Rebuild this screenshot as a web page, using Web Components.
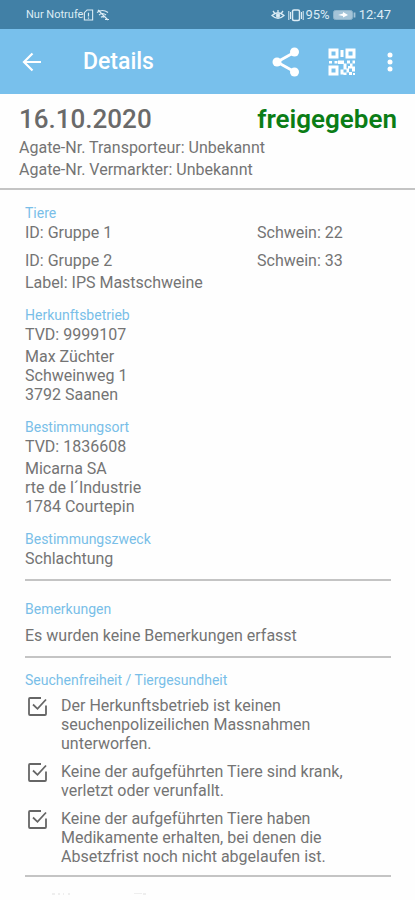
<!DOCTYPE html>
<html lang="de">
<head>
<meta charset="utf-8">
<meta name="viewport" content="width=device-width, initial-scale=1">
<title>Details</title>
<style>
html { background: #fefefe; }
body { margin: 0; font-family: Roboto, "Liberation Sans", sans-serif; font-size: 16px; line-height: 19px; color: #747474; }
</style>
</head>
<body>
<detail-page></detail-page>
<script>
const define = (name, html) => {
  const template = document.createElement('template');
  template.innerHTML = html;
  customElements.define(name, class extends HTMLElement {
    constructor() {
      super();
      this.attachShadow({ mode: 'open' }).append(template.content.cloneNode(true));
    }
  });
};

define('status-bar', `
<style>
:host { display: flex; justify-content: space-between; align-items: center; height: 29px; padding: 1px 24px 0 26px; box-sizing: border-box; background: #4180a6; color: #dcecf5; font-size: 11px; line-height: 14px; }
div { display: flex; align-items: center; }
.right { font-size: 13px; }
svg { display: block; fill: none; stroke: currentColor; }
.vib { margin: 0 1px 0 3px; }
.battery { margin: 0 3px; }
.wifi { margin-left: 2px; }
</style>
<div><span>Nur Notrufe</span>
<svg width="11" height="14" viewBox="0 0 12 14"><path d="M4.500 1.500H10.500V12.500H1.500V4.500Z" stroke-width="1.200"/><path d="M6 4.500V8.500M6 9.700V11" stroke-width="1.300"/></svg>
<svg class="wifi" width="14" height="12" viewBox="0 0 14 12"><path d="M1 3.500Q6.500-.5 12 3.500M3 6Q6.500 3 10 6M5 8.300Q6.500 7 8 8.300M2 1L12 11M9 10.500H13" stroke-width="1.200"/></svg>
</div>
<div class="right">
<svg width="14" height="14" viewBox="0 0 14 14"><path d="M1 7.500Q7 2 13 7.500Q7 13 1 7.500ZM7 4V2M3.500 5L2 3M10.500 5L12 3" stroke-width="1.300"/><circle cx="7" cy="7.500" r="1.700" fill="currentColor"/></svg>
<svg class="vib" width="16" height="14" viewBox="0 0 16 14"><rect x="4.500" y="2" width="7" height="10.500" rx="1.500" stroke-width="1.500"/><path d="M2.500 4V11M13.500 4V11M.8 3V12M15.200 3V12" stroke-width="1"/></svg>
<span>95%</span>
<svg class="battery" width="23" height="12" viewBox="0 0 23 12"><rect x=".5" y="1.500" width="19" height="9" rx="2" fill="#a4c4d8" stroke="#8db4cb"/><path d="M21.500 3.500V8.500" stroke="#a4c4d8" stroke-width="1.800"/><path d="M5 6L10 4.500V3L15 6L10 8.500V7Z" fill="#fff" stroke="none"/></svg>
<span>12:47</span></div>`);

define('icon-button', `
<style>
:host { display: block; }
button { display: grid; place-items: center; width: 100%; height: 100%; margin: 0; padding: 0; border: 0; background: none; color: inherit; cursor: pointer; }
::slotted(svg) { display: block; }
</style>
<button type="button"><slot></slot></button>`);

define('app-bar', `
<style>
:host { display: flex; align-items: center; height: 65px; padding: 0 9px 0 16px; box-sizing: border-box; background: #78c0ec; color: #fff; }
icon-button { width: 32px; height: 48px; }
h1 { flex: 1; margin: 0 0 0 35px; font-size: 23px; line-height: 28px; font-weight: 500; }
.share { width: 56px; }
.qr { width: 56px; }
.more { width: 32px; margin-left: 4px; }
</style>
<icon-button><svg width="20" height="20" viewBox="0 0 20 20" role="img" aria-label="Zurück" fill="none" stroke="#fff" stroke-width="2.200"><path d="M10.500 1.500L2 10L10.500 18.500M2 10H19"/></svg></icon-button>
<h1>Details</h1>
<icon-button class="share"><svg width="28" height="30" viewBox="0 0 28 30" role="img" aria-label="Teilen"><path d="M23 5L5 15L23 25" fill="none" stroke="#fff" stroke-width="2.800"/><g fill="#fff"><circle cx="22.500" cy="5" r="4.500"/><circle cx="5" cy="15" r="4.500"/><circle cx="22.500" cy="25" r="4.500"/></g></svg></icon-button>
<icon-button class="qr"><svg width="28" height="28" viewBox="0 0 28 28" role="img" aria-label="QR-Code"><g fill="none" stroke="#fff" stroke-width="3"><rect x="2" y="2" width="7" height="7"/><rect x="19" y="2" width="7" height="7"/><rect x="2" y="19" width="7" height="7"/></g><path fill="#fff" d="M12.500 2h3v7h-3zM1 13h3v2.500H1zM6.500 13h3v2.500h-3zM10 12.500h6v3h2.500v3h-3v-2.500H10zM19 12.500h3v3h-3zM24.500 12.500h2.500v3h-2.500zM22 15.500h2.500v3H22zM15.500 18.500h3v3h-3v5h-3v-5h3zM24 18.500h3v5h-3zM20 18h4v2.500h-4zM18.500 20.500h2.500v4h-2.500v2.500h-3v-2.500h3zM21 24h3v3h-3zM25 25h2v2h-2z"/></svg></icon-button>
<icon-button class="more"><svg width="6" height="20" viewBox="0 0 6 20" role="img" aria-label="Mehr" fill="#fff"><circle cx="3" cy="3" r="2.500"/><circle cx="3" cy="10" r="2.500"/><circle cx="3" cy="17" r="2.500"/></svg></icon-button>`);

define('transport-summary', `
<style>
:host { display: block; padding: 8px 18px 7px 19px; border-bottom: 2px solid #c4c4c4; line-height: 22px; }
div { display: flex; justify-content: space-between; align-items: center; font-size: 26px; line-height: 35px; font-weight: 500; }
h2 { margin: 0; font: inherit; color: #6a6a6a; }
strong { font-weight: 600; color: #0b7d16; }
p { margin: 0; }
</style>
<div><h2><slot name="date"></slot></h2><strong><slot name="state"></slot></strong></div>
<p><slot></slot></p>
<p><slot name="marketer"></slot></p>`);

define('detail-section', `
<style>
:host { display: block; }
h3 { margin: 0; font-size: 14px; line-height: 18px; font-weight: 400; color: #79bee8; }
</style>
<h3><slot name="title"></slot></h3>
<slot></slot>`);

define('animal-group', `
<style>
:host { display: grid; grid-template-columns: 232fr 134fr; line-height: 22px; }
</style>
<span><slot></slot></span><span><slot name="count"></slot></span>`);

define('health-check', `
<style>
:host { display: block; }
label { display: flex; align-items: flex-start; gap: 13px; }
input { appearance: none; display: grid; width: 21px; height: 21px; margin: 0 0 0 2px; }
.box { position: relative; flex: none; width: 23px; height: 21px; }
.box svg { position: absolute; left: 2px; top: 0; pointer-events: none; }
input:not(:checked) + svg .tick { visibility: hidden; }
</style>
<label><span class="box"><input type="checkbox" checked><svg width="21" height="21" viewBox="0 0 21 21" fill="none" stroke="#666" stroke-width="1.800"><path d="M14 2H3Q2 2 2 3V18Q2 19 3 19H18Q19 19 19 18V9.500"/><path class="tick" d="M6 8.500L10.500 12.800L19 3.500"/></svg></span><span><slot></slot></span></label>`);

define('detail-page', `
<style>
:host { display: block; height: 100vh; overflow: hidden; }
main { padding: 14px 24px 0 25px; }
p { margin: 0; }
.line { line-height: 22px; }
.address { padding: 1px 0 2px; }
.stack { display: grid; gap: 12px; }
.groups { display: grid; gap: 6px; }
hr { height: 2px; margin: 9px 0 19px; border: 0; background: #c4c4c4; }
hr.tight { margin-bottom: 13px; }
.checks { display: grid; gap: 9px; padding-top: 7px; }
.remark { padding-top: 7px; }
.fading { display: block; margin: -4px 0 0 25px; }
</style>
<status-bar></status-bar>
<app-bar></app-bar>
<transport-summary><span slot="date">16.10.2020</span><span slot="state">freigegeben</span>Agate-Nr. Transporteur: Unbekannt<span slot="marketer">Agate-Nr. Vermarkter: Unbekannt</span></transport-summary>
<main>
<div class="stack">
<detail-section><span slot="title">Tiere</span><div class="groups"><animal-group>ID: Gruppe 1<span slot="count">Schwein: 22</span></animal-group><animal-group>ID: Gruppe 2<span slot="count">Schwein: 33</span></animal-group></div><p class="line">Label: IPS Mastschweine</p></detail-section>
<detail-section><span slot="title">Herkunftsbetrieb</span><p class="line">TVD: 9999107</p><p class="address">Max Züchter<br>Schweinweg 1<br>3792 Saanen</p></detail-section>
<detail-section><span slot="title">Bestimmungsort</span><p class="line">TVD: 1836608</p><p class="address">Micarna SA<br>rte de l´Industrie<br>1784 Courtepin</p></detail-section>
<detail-section><span slot="title">Bestimmungszweck</span><p class="line">Schlachtung</p></detail-section>
</div>
<hr>
<detail-section><span slot="title">Bemerkungen</span><p class="line remark">Es wurden keine Bemerkungen erfasst</p></detail-section>
<hr class="tight">
<detail-section><span slot="title">Seuchenfreiheit / Tiergesundheit</span><div class="checks">
<health-check>Der Herkunftsbetrieb ist keinen seuchenpolizeilichen Massnahmen unterworfen.</health-check>
<health-check>Keine der aufgeführten Tiere sind krank, verletzt oder verunfallt.</health-check>
<health-check>Keine der aufgeführten Tiere haben Medikamente erhalten, bei denen die Absetzfrist noch nicht abgelaufen ist.</health-check>
</div></detail-section>
<hr>
<svg class="fading" width="120" height="4" viewBox="0 0 120 4" fill="#eee" aria-hidden="true"><path d="M2 1h3v2H2zM8 1h2v2H8zM13 1h1v2h-1zM18 1h2v2h-2zM84 1h8v1h-8zM93 1h3v2h-3z"/></svg>
</main>`);
</script>
</body>
</html>
